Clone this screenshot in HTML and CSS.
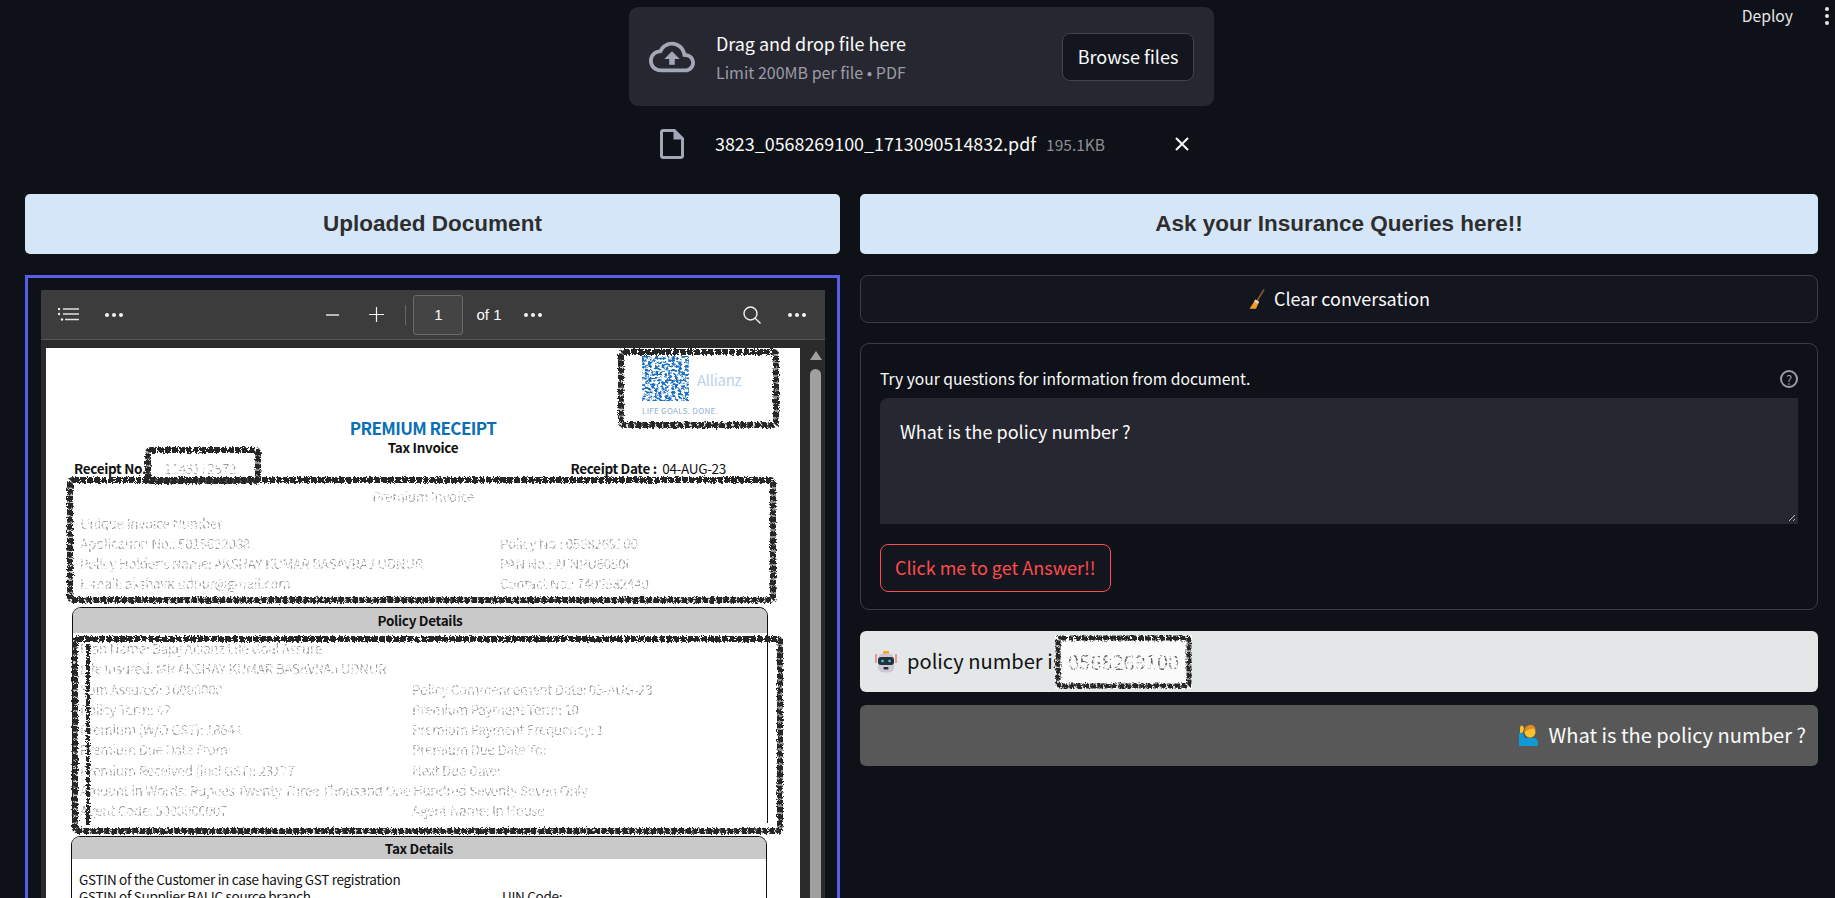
FILE: index.html
```html
<!DOCTYPE html>
<html lang="en">
<head>
  <meta charset="UTF-8" />
  <title>Insurance document chat</title>
  <link rel="stylesheet" href="styles.css">
</head>
<body>
  <svg class="defs" width="0" height="0">
    <filter id="rough" x="-5%" y="-5%" width="110%" height="110%">
      <feTurbulence type="fractalNoise" baseFrequency="0.6" numOctaves="2" seed="4" result="n" />
      <feDisplacementMap in="SourceGraphic" in2="n" scale="5" />
    </filter>
    <filter id="rubbed" x="0" y="0" width="100%" height="100%">
      <feTurbulence type="fractalNoise" baseFrequency="0.3 0.5" numOctaves="2" seed="9" />
      <feColorMatrix type="matrix" values="0 0 0 0 0  0 0 0 0 0  0 0 0 0 0  0 0 0 -7 3.900" result="m" />
      <feComposite in="SourceGraphic" in2="m" operator="in" />
    </filter>
  </svg>

  <div class="topbar">
    <span>Deploy</span>
    <span class="kebab"><i></i><i></i><i></i></span>
  </div>

  <main class="app">
    <section class="upload">
      <div class="dropzone">
        <svg class="cloud" viewBox="0 0 24 24"><path d="M19.35 10.04C18.67 6.59 15.64 4 12 4 9.11 4 6.6 5.64 5.35 8.04 2.34 8.36 0 10.91 0 14c0 3.31 2.69 6 6 6h13c2.76 0 5-2.24 5-5 0-2.64-2.05-4.78-4.65-4.96zM19 18H6c-2.21 0-4-1.79-4-4 0-2.05 1.53-3.76 3.56-3.97l1.07-.11.5-.95C8.08 7.14 9.94 6 12 6c2.62 0 4.88 1.86 5.37 4.43l.3 1.5 1.53.11c1.56.1 2.8 1.41 2.8 2.96 0 1.65-1.35 3-3 3zM8 13h2.55v3h2.9v-3H16l-4-4z"/></svg>
        <div class="drop-text">
          <div class="drop-title">Drag and drop file here</div>
          <div class="drop-sub">Limit 200MB per file • PDF</div>
        </div>
        <button class="browse">Browse files</button>
      </div>
      <div class="file-row">
        <svg class="file-icon" viewBox="0 0 24 24"><path d="M14 2H6c-1.1 0-1.99.9-1.99 2L4 20c0 1.1.89 2 1.99 2H18c1.1 0 2-.9 2-2V8l-6-6zM6 20V4h7v5h5v11H6z"/></svg>
        <span class="file-name">3823_0568269100_1713090514832.pdf</span>
        <span class="file-size">195.1KB</span>
        <svg class="file-close" viewBox="0 0 16 16"><path d="M2 2l12 12M14 2L2 14"/></svg>
      </div>
    </section>

    <div class="columns">
      <section class="left">
        <h2 class="bar">Uploaded Document</h2>
        <div class="pdf-frame">
          <div class="viewer">
            <div class="toolbar">
              <div class="tool-group">
                <svg class="ico-list" viewBox="0 0 21 13"><path d="M5 1h16M5 6h16M7 11.500h14"/><circle cx="1" cy="1" r="1.200"/><circle cx="1" cy="6" r="1.200"/><circle cx="4" cy="11.500" r="1.200"/></svg>
                <span class="dots"><i></i><i></i><i></i></span>
              </div>
              <div class="tool-group center">
                <span class="minus"></span>
                <svg class="ico-plus" viewBox="0 0 15 15"><path d="M7.500 0v15M0 7.500h15"/></svg>
                <span class="sep"></span>
                <span class="page-box">1</span>
                <span class="page-of">of 1</span>
                <span class="dots"><i></i><i></i><i></i></span>
              </div>
              <div class="tool-group right">
                <svg class="ico-search" viewBox="0 0 18 18"><circle cx="7.500" cy="7.500" r="6.500"/><path d="M12.200 12.200l5.300 5.300"/></svg>
                <span class="dots"><i></i><i></i><i></i></span>
              </div>
            </div>
            <div class="viewer-body">
              <div class="page">
                <div class="logo-row">
                  <div class="logo-left">
                    <svg class="logo-mark" viewBox="0 0 47 45"><rect width="47" height="45" fill="#1d6fbe" filter="url(#rubbed)"/></svg>
                    <div class="logo-goals">LIFE GOALS. DONE.</div>
                  </div>
                  <div class="logo-name">Allianz</div>
                </div>
                <div class="doc-title">PREMIUM RECEIPT</div>
                <div class="doc-sub">Tax Invoice</div>
                <div class="receipt-row">
                  <b>Receipt No.:</b>
                  <span class="faded receipt-no">1143172572</span>
                  <span class="receipt-date"><b>Receipt Date :</b> &nbsp;04-AUG-23</span>
                </div>
                <div class="faded invoice-head">Premium Invoice</div>
                <div class="faded rows rows-a">
                  <span>Unique Invoice Number</span><span></span>
                  <span>Application No.: 5015622088</span><span>Policy No.: 0568269100</span>
                  <span>Policy Holder's Name: AKSHAY KUMAR BASAVRAJ UDNUR</span><span>PAN No.: AFNPU6050I</span>
                  <span>E-mail: akshayk.udnur@gmail.com</span><span>Contact No.: 7405582440</span>
                </div>
                <div class="doc-box policy-box">
                  <div class="box-head">Policy Details</div>
                  <div class="faded rows rows-b">
                    <span>Plan Name: Bajaj Allianz Life Goal Assure</span><span></span>
                    <span>Life Insured: MR AKSHAY KUMAR BASAVRAJ UDNUR</span><span></span>
                    <span>Sum Assured: 10000000</span><span>Policy Commencement Date: 05-AUG-23</span>
                    <span>Policy Term: 42</span><span>Premium Payment Term: 10</span>
                    <span>Premium (W/O GST): 18641</span><span>Premium Payment Frequency: 1</span>
                    <span>Premium Due Date From:</span><span>Premium Due Date To:</span>
                    <span>Premium Received (incl GST): 23177</span><span>Next Due Date:</span>
                    <span class="wide">Amount in Words: Rupees Twenty Three Thousand One Hundred Seventy Seven Only</span>
                    <span>Agent Code: 5000000007</span><span>Agent Name: In House</span>
                  </div>
                </div>
                <div class="doc-box tax-box">
                  <div class="box-head tax-head">Tax Details</div>
                  <div class="tax-line">GSTIN of the Customer in case having GST registration</div>
                  <div class="tax-line tax-split"><span>GSTIN of Supplier BALIC source branch</span><span>UIN Code:</span></div>
                </div>
                <svg class="scribbles" viewBox="0 0 754 549">
                  <g filter="url(#rough)" fill="none" stroke="#262626" stroke-width="6" stroke-dasharray="6 1">
                    <rect x="575" y="4" width="155" height="73" rx="3"/>
                    <rect x="24" y="132" width="703" height="120" rx="3"/>
                    <rect x="102" y="102" width="110" height="31" rx="3"/>
                    <rect x="29" y="291" width="705" height="192" rx="3"/>
                    <path d="M42 296v182" stroke-width="4"/>
                  </g>
                </svg>
              </div>
              <div class="scrollbar">
                <span class="scroll-up"></span>
                <span class="scroll-thumb"></span>
              </div>
            </div>
          </div>
        </div>
      </section>

      <section class="right">
        <h2 class="bar">Ask your Insurance Queries here!!</h2>
        <button class="clear-btn">
          <svg class="broom" viewBox="0 0 16 20"><path d="M15 0.500L8 12" stroke="#8a5a34" stroke-width="1.500" fill="none"/><path d="M6.500 10.500l3.500 2.200-3 7H0.500z" fill="#f59a23"/><path d="M6.500 10.500l3.500 2.200-1 2.300-4-2.400z" fill="#d9d3c3"/></svg>
          Clear conversation
        </button>
        <form class="query-form">
          <div class="field-label">
            <span>Try your questions for information from document.</span>
            <span class="help">?</span>
          </div>
          <div class="textarea">
            What is the policy number ?
            <svg class="grip" viewBox="0 0 8 8"><path d="M7 1L1 7M7 5L5 7"/></svg>
          </div>
          <button class="ask-btn" type="button">Click me to get Answer!!</button>
        </form>
        <div class="msg bot">
          <svg class="emoji" viewBox="0 0 22 22">
            <path d="M1 3v9M21 3v9" stroke="#e0483e" stroke-width="1"/>
            <rect x="8" y="0" width="6" height="3" fill="#f6a623"/>
            <rect x="3" y="2.500" width="16" height="19" rx="5" fill="#cfc6d4"/>
            <rect x="3" y="6" width="16" height="8" rx="3" fill="#26303a"/>
            <circle cx="7.500" cy="10" r="1.300" fill="#3fd0e0"/>
            <circle cx="14.500" cy="10" r="1.300" fill="#3fd0e0"/>
            <rect x="8.500" y="16" width="5" height="2.500" rx="1" fill="#26303a"/>
          </svg>
          <span>policy number is</span>
          <span class="redact">
            <span class="redact-no">0568269100</span>
            <svg viewBox="0 0 137 54"><rect x="3" y="3" width="131" height="48" rx="3" fill="none" stroke="#262626" stroke-width="5" stroke-dasharray="6 1" filter="url(#rough)"/></svg>
          </span>
        </div>
        <div class="msg user">
          <svg class="emoji" viewBox="0 0 22 22">
            <path d="M2 21V8l3-1 3 6h8c3 0 5 2 5 5v3z" fill="#0f9ad6"/>
            <path d="M3 8V2.500l1-2 2 .5 1 2-1 4.500z" fill="#fbc02d"/>
            <circle cx="13" cy="7" r="5.500" fill="#fbc02d"/>
            <path d="M7.500 6c0-4 3-6 6-6s5 2 5 5l-2-1.500-5 1-3 2z" fill="#e58a1f"/>
          </svg>
          <span>What is the policy number ?</span>
        </div>
      </section>
    </div>
  </main>
</body>
</html>
```

FILE: styles.css
```css
* {
  box-sizing: border-box;
}
html, body {
  margin: 0;
  height: 898px;
  overflow: hidden;
}
body {
  background: #0e1117;
  color: #fafafa;
  font-family: "Noto Sans CJK KR", "Noto Sans", sans-serif;
  font-size: 18px;
  line-height: 1.3;
}
.defs {
  position: absolute;
}

/* top right */
.topbar {
  position: absolute;
  top: 4px;
  right: 4px;
  display: flex;
  align-items: center;
  gap: 32px;
  font-size: 15.700px;
  color: #e6e6e6;
  line-height: 24px;
}
.kebab {
  display: flex;
  flex-direction: column;
  gap: 3px;
  padding-right: 2px;
}
.kebab i {
  width: 4px;
  height: 4px;
  border-radius: 50%;
  background: #e6e6e6;
}

/* uploader */
.app {
  padding-top: 7px;
}
.upload {
  width: 585px;
  margin-left: 629px;
}
.dropzone {
  height: 99px;
  display: flex;
  align-items: center;
  padding: 0 20px;
  background: #262730;
  border-radius: 9px;
}
.cloud {
  width: 46px;
  height: 46px;
  fill: #a3a8b8;
  flex: none;
}
.drop-text {
  margin-left: 21px;
  flex: 1;
}
.drop-title {
  line-height: 24px;
  letter-spacing: -0.050px;
}
.drop-sub {
  margin-top: 6px;
  font-size: 16px;
  line-height: 22px;
  color: #9a9ca6;
}
.browse {
  width: 132px;
  height: 48px;
  background: #13161f;
  color: #fafafa;
  border: 1px solid #41444e;
  border-radius: 8px;
  font: inherit;
}
.file-row {
  height: 46px;
  margin-top: 15px;
  display: flex;
  align-items: center;
  padding-left: 27px;
}
.file-icon {
  width: 36px;
  height: 36px;
  fill: #a3a8b8;
  flex: none;
  margin-left: -2px;
}
.file-name {
  margin-left: 25px;
  font-size: 17.900px;
}
.file-size {
  margin-left: 10px;
  font-size: 15.500px;
  color: #8b8d96;
}
.file-close {
  margin-left: auto;
  margin-right: 24px;
  width: 16px;
  height: 16px;
  stroke: #fafafa;
  stroke-width: 2;
  fill: none;
}

/* columns */
.columns {
  display: grid;
  grid-template-columns: 815px 958px;
  gap: 20px;
  padding-left: 25px;
  margin-top: 27px;
}
.bar {
  height: 60px;
  margin: 0;
  display: flex;
  align-items: center;
  justify-content: center;
  background: #d6e6f9;
  border-radius: 5px;
  color: #2e2e2e;
  font-family: "Liberation Sans", Arial, sans-serif;
  font-size: 22.500px;
  font-weight: bold;
}
.pdf-frame {
  margin-top: 21px;
  height: 640px;
  padding: 12px 12px 0 13px;
  border: 3px solid #5c5ce6;
}
.viewer {
  height: 620px;
  background: #2b2b2b;
  font-family: "Liberation Sans", Arial, sans-serif;
}
.toolbar {
  height: 50px;
  display: flex;
  align-items: center;
  justify-content: space-between;
  padding: 0 19px 0 17px;
  background: #3c3c3c;
  border-bottom: 1px solid #555;
}
.tool-group {
  display: flex;
  align-items: center;
}
.center {
  margin-left: 2.500px;
}
.dots {
  display: flex;
  gap: 3px;
}
.dots i {
  width: 4px;
  height: 4px;
  border-radius: 50%;
  background: #f2f2f2;
}
.ico-list {
  width: 21px;
  height: 13px;
  margin-right: 26px;
  stroke: #e0e0e0;
  stroke-width: 1.300;
  fill: #f0f0f0;
}
.ico-list circle {
  stroke: none;
}
.minus {
  width: 13px;
  height: 2px;
  background: #b8b8b8;
  margin-right: 30px;
}
.ico-plus {
  width: 15px;
  height: 15px;
  stroke: #f2f2f2;
  stroke-width: 1.200;
}
.sep {
  width: 1px;
  height: 20px;
  background: #666;
  margin: 0 7px 0 21px;
}
.page-box {
  width: 50px;
  height: 40px;
  display: flex;
  align-items: center;
  justify-content: center;
  background: #444;
  border: 1px solid #6a6a6a;
  border-radius: 3px;
  font-size: 15px;
}
.page-of {
  margin: 0 22.500px 0 13px;
  font-size: 15px;
}
.ico-search {
  width: 18px;
  height: 18px;
  margin-right: 27px;
  stroke: #f2f2f2;
  stroke-width: 1.400;
  fill: none;
}
.viewer-body {
  display: flex;
  height: 570px;
  padding: 8px 0 0 5px;
  overflow: hidden;
}
.scrollbar {
  flex: 1;
  padding: 3px 4px 0 10px;
}
.scroll-up {
  display: block;
  width: 0;
  border: 6px solid transparent;
  border-top: 0;
  border-bottom: 9px solid #a0a0a0;
}
.scroll-thumb {
  display: block;
  width: 11px;
  height: 600px;
  margin-top: 9px;
  background: #a0a0a0;
  border-radius: 6px;
}

/* pdf page */
.page {
  position: relative;
  flex: none;
  width: 754px;
  height: 600px;
  background: #fff;
  color: #111;
  font-family: "Noto Sans CJK KR", "Noto Sans", sans-serif;
  font-size: 13.500px;
  letter-spacing: -0.300px;
}
.logo-row {
  height: 69px;
  display: flex;
  padding: 8px 0 0 596px;
}
.logo-left {
  width: 47px;
  flex: none;
}
.logo-mark {
  display: block;
  width: 47px;
  height: 45px;
}
.logo-goals {
  margin-top: 5px;
  font-size: 8px;
  line-height: 10px;
  letter-spacing: 0.300px;
  white-space: nowrap;
  color: #8fb0d2;
}
.logo-name {
  margin: 15px 0 0 8px;
  font-size: 15px;
  line-height: 18px;
  color: #bcd3ea;
}
.doc-title {
  text-align: center;
  font-size: 17px;
  letter-spacing: -0.600px;
  font-weight: bold;
  line-height: 22px;
  color: #0a6fb8;
}
.doc-sub {
  text-align: center;
  font-weight: bold;
  line-height: 16px;
}
.receipt-row {
  display: flex;
  align-items: center;
  height: 18px;
  margin-top: 5px;
  padding-left: 28px;
}
.receipt-no {
  margin-left: 14px;
}
.receipt-date {
  margin-left: auto;
  margin-right: 74px;
}
.faded {
  color: #999;
  filter: url(#rubbed);
}
.invoice-head {
  margin-top: 9px;
  line-height: 18px;
  text-align: center;
}
.rows {
  display: grid;
  line-height: 20px;
  white-space: nowrap;
}
.rows-a {
  margin-top: 8px;
  padding-left: 34px;
  grid-template-columns: 420px 1fr;
}
.rows-b {
  margin-top: 5px;
  padding-left: 7px;
  grid-template-columns: 332px 1fr;
  grid-auto-rows: 20.250px;
}
.wide {
  grid-column: 1 / 3;
}
.doc-box {
  width: 696px;
  margin-left: 26px;
  border: 1px solid #111;
  border-bottom: 0;
  border-radius: 9px 9px 0 0;
  overflow: hidden;
}
.policy-box {
  margin-top: 14px;
  height: 216px;
}
.box-head {
  height: 25px;
  line-height: 25px;
  background: #c9c9c9;
  text-align: center;
  font-weight: bold;
}
.tax-box {
  margin-top: 13px;
  margin-left: 25px;
}
.tax-head {
  height: 22px;
  line-height: 22px;
}
.tax-line {
  padding-left: 7px;
  margin-top: 11px;
  line-height: 18px;
}
.tax-split {
  display: flex;
  margin-top: -1px;
}
.tax-split span:first-child {
  width: 423px;
}
.scribbles {
  position: absolute;
  top: 0;
  left: 0;
  width: 754px;
  height: 549px;
  pointer-events: none;
}

/* right side */
.clear-btn {
  width: 100%;
  height: 48px;
  margin-top: 21px;
  padding-left: 7px;
  display: flex;
  align-items: center;
  justify-content: center;
  gap: 9px;
  background: #13161f;
  color: #fafafa;
  border: 1px solid #3b3d45;
  border-radius: 8px;
  font: inherit;
}
.broom {
  width: 16px;
  height: 20px;
}
.query-form {
  height: 267px;
  margin-top: 20px;
  padding: 23px 19px 0;
  border: 1px solid #3b3d45;
  border-radius: 9px;
}
.field-label {
  display: flex;
  justify-content: space-between;
  align-items: center;
  height: 24px;
  font-size: 15.650px;
}
.help {
  width: 18px;
  height: 18px;
  display: flex;
  align-items: center;
  justify-content: center;
  border: 2px solid #9a9ca6;
  border-radius: 50%;
  color: #9a9ca6;
  font-size: 13px;
  line-height: 1;
}
.textarea {
  position: relative;
  height: 126px;
  margin-top: 7px;
  padding: 22px 20px;
  background: #262730;
  border-radius: 8px 0 0 0;
}
.grip {
  position: absolute;
  right: 2px;
  bottom: 2px;
  width: 8px;
  height: 8px;
  stroke: #bbb;
  stroke-width: 1;
}
.ask-btn {
  height: 48px;
  margin-top: 20px;
  padding: 0 14px;
  background: #13161f;
  color: #ff4b4b;
  border: 1px solid #ff4b4b;
  border-radius: 8px;
  font: inherit;
}
.msg {
  height: 61px;
  display: flex;
  align-items: center;
  padding: 0 15px;
  border-radius: 6px;
  font-size: 20.100px;
}
.emoji {
  width: 22px;
  height: 22px;
  margin-right: 10px;
  flex: none;
}
.bot {
  margin-top: 21px;
  background: #e4e7e8;
  color: #111;
}
.user {
  margin-top: 13px;
  background: #585858;
  justify-content: flex-end;
  padding-right: 12px;
}
.redact {
  position: relative;
  flex: none;
  width: 137px;
  height: 54px;
  margin-left: -7px;
  display: flex;
  align-items: center;
  justify-content: center;
  background: #fbfbfb;
}
.redact-no {
  font-size: 20px;
  color: #666;
  filter: url(#rubbed);
}
.redact svg {
  position: absolute;
  top: 0;
  left: 0;
  width: 137px;
  height: 54px;
}
```
